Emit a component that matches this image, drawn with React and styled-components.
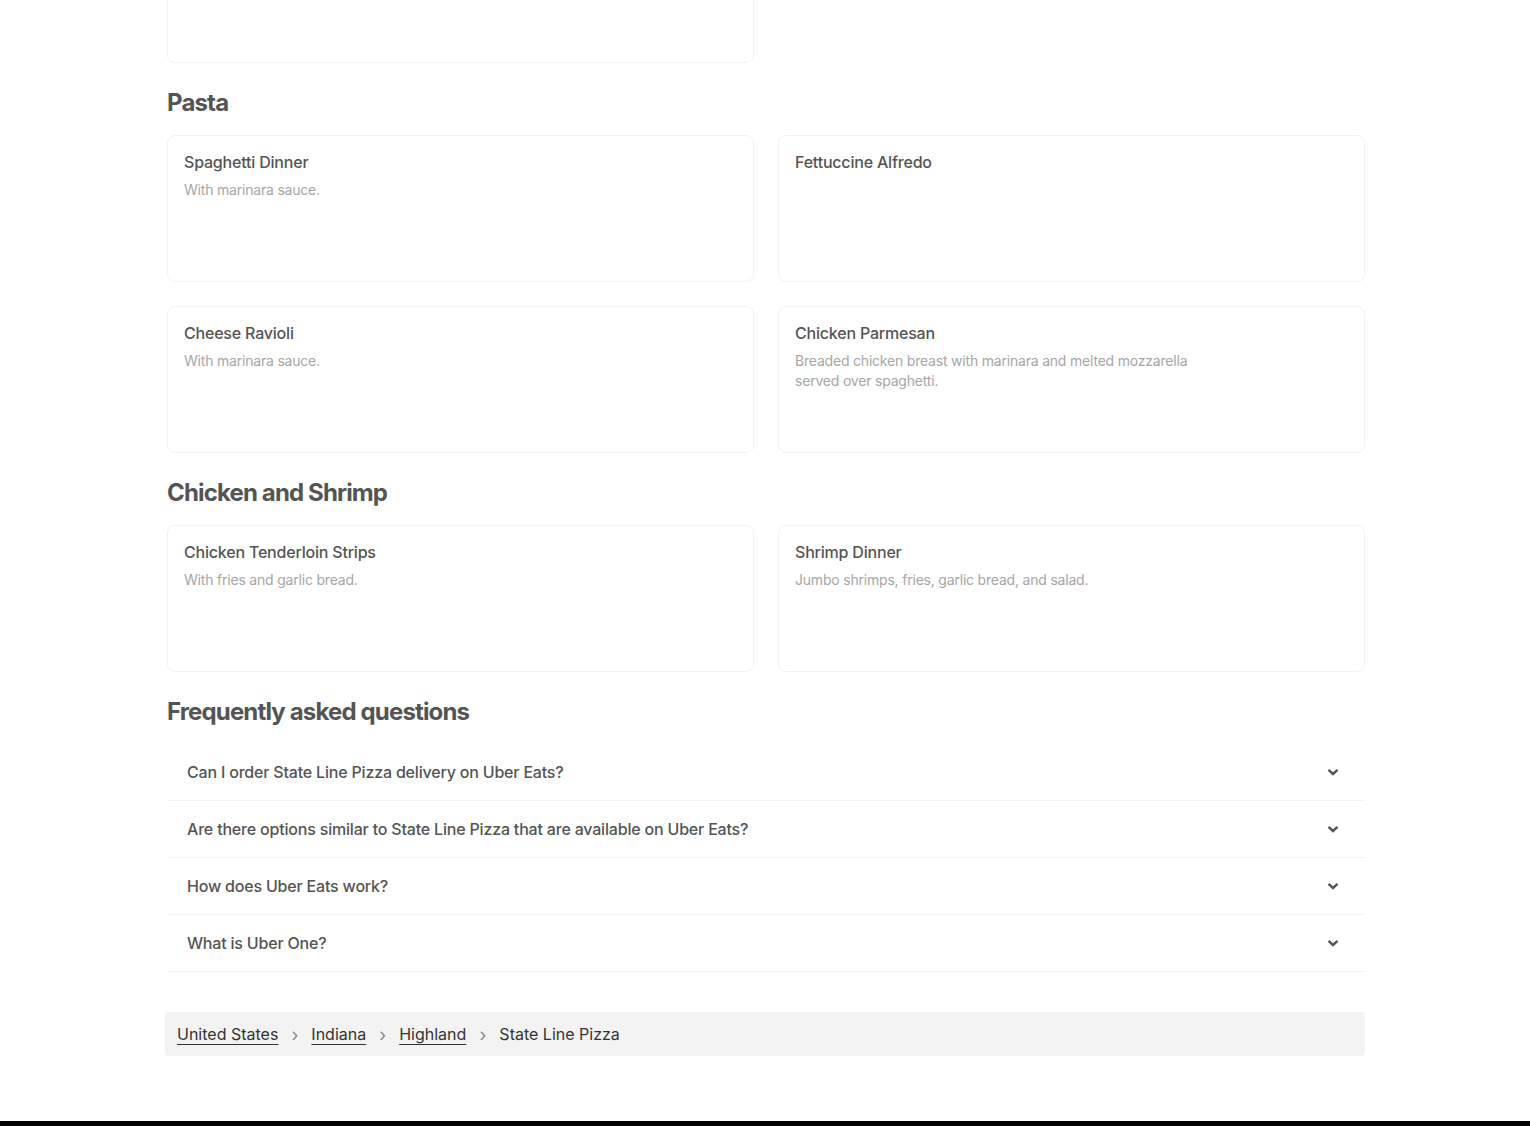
import styled, { createGlobalStyle } from "styled-components"

const GlobalStyle = createGlobalStyle`
  html, body {
    margin: 0;
    padding: 0;
    background: #fff;
    font-family: Inter, "Noto Sans", sans-serif;
    color: #545454;
    overflow: hidden;
  }
`

const Page = styled.div`
  width: 1198px;
  margin: -84px 0 0 calc(50% - 598px);
  display: flex;
  flex-direction: column;
`

const Heading = styled.h2`
  margin: 24px 0 16px 0;
  font-size: 24px;
  line-height: 32px;
  font-weight: 700;
  letter-spacing: -0.85px;
  color: #545454;
`

const Grid = styled.div`
  display: grid;
  grid-template-columns: 1fr 1fr;
  gap: 24px;
`

const Card = styled.div`
  height: 147px;
  box-sizing: border-box;
  border: 1px solid #f2f2f2;
  border-radius: 8px;
  padding: 16px;
  display: flex;
  flex-direction: column;
  gap: 8px;
`

const CardTitle = styled.div`
  font-size: 16px;
  line-height: 20px;
  font-weight: 500;
  letter-spacing: -0.2px;
  color: #545454;
`

const CardDesc = styled.div`
  max-width: 420px;
  font-size: 14px;
  line-height: 20px;
  letter-spacing: -0.2px;
  color: #a6a6a6;
`

const FaqList = styled.div`
  display: flex;
  flex-direction: column;
`

const FaqRow = styled.div`
  height: 57px;
  box-sizing: border-box;
  padding: 0 26px 0 20px;
  border-bottom: 1px solid #f3f3f3;
  display: flex;
  align-items: center;
  justify-content: space-between;
  font-size: 16px;
  font-weight: 500;
  letter-spacing: -0.19px;
  color: #545454;
`

const Crumbs = styled.nav`
  margin: 40px 0 0 -2px;
  height: 44px;
  padding: 0 12px;
  background: #f3f3f3;
  border-radius: 4px;
  display: flex;
  align-items: center;
  gap: 12px;
  font-size: 16px;
  color: #333;
`

const CrumbLink = styled.a`
  color: #333;
  text-decoration: underline;
  text-underline-offset: 4px;
  text-decoration-thickness: 1px;
`

const Sep = styled.span`
  color: #8a8a8a;
  font-size: 18px;
  width: 9px;
  text-align: center;
`

const Footer = styled.footer`
  margin-top: 65px;
  height: 200px;
  background: #000;
`

const Chevron = () => (
  <svg width="12" height="8" viewBox="0 0 12 8" aria-hidden="true">
    <path d="M1.5 1.8 L6 6 L10.5 1.8" fill="none" stroke="#545454" strokeWidth="2.4" />
  </svg>
)

const sections = [
  {
    title: "Pasta",
    items: [
      { name: "Spaghetti Dinner", desc: "With marinara sauce." },
      { name: "Fettuccine Alfredo" },
      { name: "Cheese Ravioli", desc: "With marinara sauce." },
      {
        name: "Chicken Parmesan",
        desc: "Breaded chicken breast with marinara and melted mozzarella served over spaghetti.",
      },
    ],
  },
  {
    title: "Chicken and Shrimp",
    items: [
      { name: "Chicken Tenderloin Strips", desc: "With fries and garlic bread." },
      { name: "Shrimp Dinner", desc: "Jumbo shrimps, fries, garlic bread, and salad." },
    ],
  },
]

const faqs = [
  "Can I order State Line Pizza delivery on Uber Eats?",
  "Are there options similar to State Line Pizza that are available on Uber Eats?",
  "How does Uber Eats work?",
  "What is Uber One?",
]

const App = () => {
  return (
    <>
      <GlobalStyle />
      <Page>
        <Grid>
          <Card />
        </Grid>
        {sections.map((s) => (
          <div key={s.title}>
            <Heading>{s.title}</Heading>
            <Grid>
              {s.items.map((item) => (
                <Card key={item.name}>
                  <CardTitle>{item.name}</CardTitle>
                  {item.desc && <CardDesc>{item.desc}</CardDesc>}
                </Card>
              ))}
            </Grid>
          </div>
        ))}
        <Heading>Frequently asked questions</Heading>
        <FaqList>
          {faqs.map((q) => (
            <FaqRow key={q}>
              <span>{q}</span>
              <Chevron />
            </FaqRow>
          ))}
        </FaqList>
        <Crumbs>
          <CrumbLink href="#">United States</CrumbLink>
          <Sep>›</Sep>
          <CrumbLink href="#">Indiana</CrumbLink>
          <Sep>›</Sep>
          <CrumbLink href="#">Highland</CrumbLink>
          <Sep>›</Sep>
          <span>State Line Pizza</span>
        </Crumbs>
      </Page>
      <Footer />
    </>
  )
}

export default App
